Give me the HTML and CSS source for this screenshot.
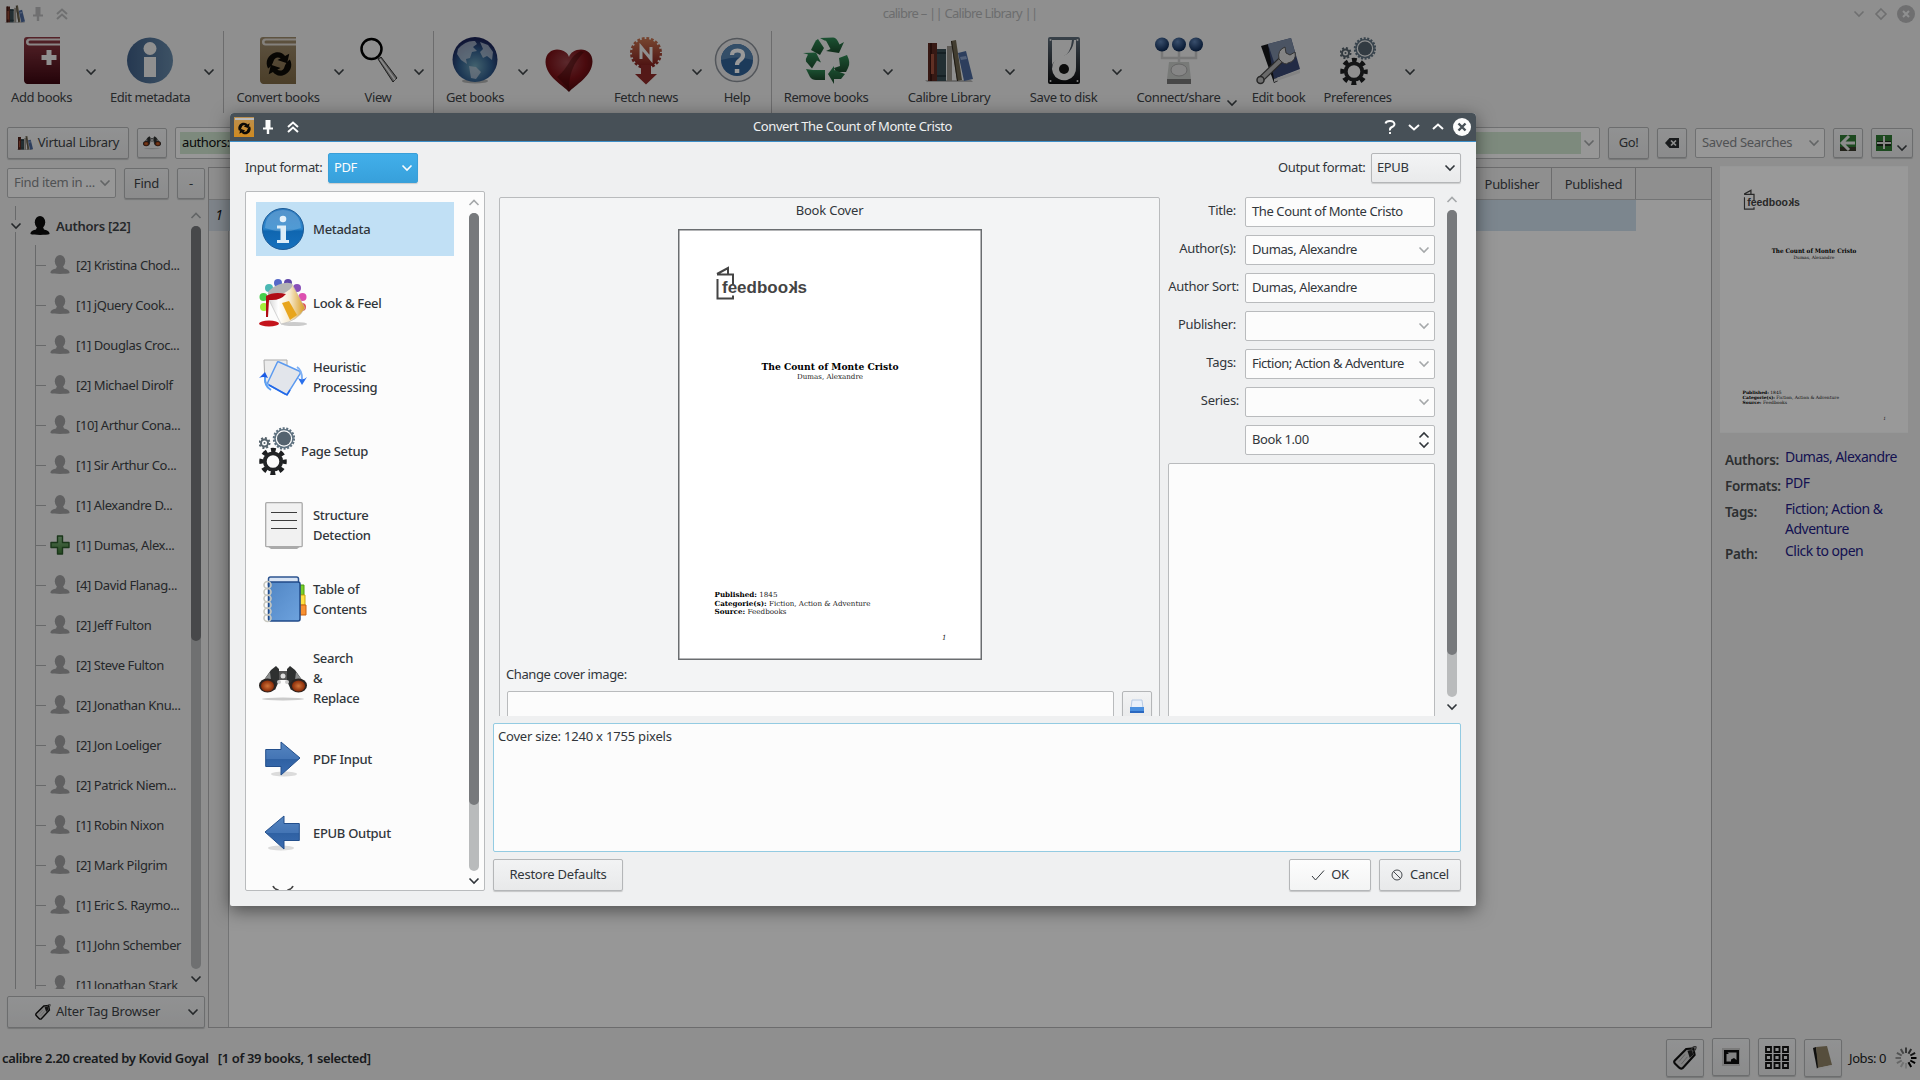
FILE: index.html
```html
<!DOCTYPE html>
<html lang="en">
<head>
<meta charset="utf-8">
<title>calibre - || Calibre Library ||</title>
<link rel="stylesheet" href="styles.css">
</head>
<body>
<svg class="defs" width="0" height="0">
  <defs>
    <linearGradient id="gRed" x1="0" y1="0" x2="0" y2="1"><stop offset="0" stop-color="#8e3a44"/><stop offset="1" stop-color="#3c0610"/></linearGradient>
    <linearGradient id="gTan" x1="0" y1="0" x2="0" y2="1"><stop offset="0" stop-color="#9c8a6c"/><stop offset="1" stop-color="#7d6844"/></linearGradient>
    <linearGradient id="gGold" x1="0" y1="0" x2="0" y2="1"><stop offset="0" stop-color="#b98f50"/><stop offset="1" stop-color="#d08a20"/></linearGradient>
    <linearGradient id="gBlue" x1="0" y1="0" x2="1" y2="0"><stop offset="0" stop-color="#3f5f87"/><stop offset="1" stop-color="#6688a8"/></linearGradient>
    <linearGradient id="gInfo" x1="0" y1="0" x2="0" y2="1"><stop offset="0" stop-color="#2f7cc0"/><stop offset=".5" stop-color="#2a85cc"/><stop offset=".55" stop-color="#0f66b0"/><stop offset="1" stop-color="#1670bd"/></linearGradient>
    <radialGradient id="gGlobe" cx=".5" cy=".65" r=".6"><stop offset="0" stop-color="#6fa3b8"/><stop offset=".6" stop-color="#2f5c8c"/><stop offset="1" stop-color="#1b2458"/></radialGradient>
    <radialGradient id="gBall" cx=".4" cy=".3" r=".7"><stop offset="0" stop-color="#5f83b4"/><stop offset="1" stop-color="#0c2852"/></radialGradient>
    <radialGradient id="gHeart" cx=".45" cy=".3" r=".8"><stop offset="0" stop-color="#97444a"/><stop offset=".5" stop-color="#7c1218"/><stop offset="1" stop-color="#3a0507"/></radialGradient>
    <linearGradient id="gNews" x1="0" y1="0" x2="0" y2="1"><stop offset="0" stop-color="#c4714e"/><stop offset="1" stop-color="#7f1d1d"/></linearGradient>
    <linearGradient id="gGreen" x1="0" y1="0" x2="0" y2="1"><stop offset="0" stop-color="#2f8a55"/><stop offset="1" stop-color="#1c4a2c"/></linearGradient>
    <linearGradient id="gDisk" x1="0" y1="0" x2="0" y2="1"><stop offset="0" stop-color="#5f6e7c"/><stop offset="1" stop-color="#0c0c0e"/></linearGradient>
    <linearGradient id="gArrow" x1="0" y1="0" x2="0" y2="1"><stop offset="0" stop-color="#5585c0"/><stop offset=".5" stop-color="#4475b5"/><stop offset=".52" stop-color="#2f61a3"/><stop offset="1" stop-color="#3a6cb0"/></linearGradient>
    <linearGradient id="gBucket" x1="0" y1="0" x2="1" y2="0"><stop offset="0" stop-color="#cfcfcf"/><stop offset=".3" stop-color="#fff"/><stop offset=".6" stop-color="#f6ead0"/><stop offset="1" stop-color="#d99a1c"/></linearGradient>
    <linearGradient id="gNote" x1="0" y1="0" x2="1" y2="1"><stop offset="0" stop-color="#5186c4"/><stop offset="1" stop-color="#6da2de"/></linearGradient>
    <radialGradient id="gLens"><stop offset="0" stop-color="#d0743a"/><stop offset="1" stop-color="#8a2c08"/></radialGradient>
    <linearGradient id="gPlus" x1="0" y1="0" x2="0" y2="1"><stop offset="0" stop-color="#86b886"/><stop offset="1" stop-color="#3c7a34"/></linearGradient>

    <symbol id="down" viewBox="0 0 12 12"><path d="M1.500 3.500 6 8l4.500-4.500" fill="none" stroke="currentColor" stroke-width="1.600"/></symbol>
    <symbol id="up" viewBox="0 0 12 12"><path d="M1.500 8 6 3.500 10.500 8" fill="none" stroke="currentColor" stroke-width="1.600"/></symbol>
    <symbol id="dblup" viewBox="0 0 14 14"><path d="M2 7 7 2.500 12 7M2 12l5-4.500 5 4.500" fill="none" stroke="currentColor" stroke-width="2"/></symbol>
    <symbol id="pin" viewBox="0 0 12 14"><path d="M3.500 0h5v7.500H11v2H7.200V14H4.800V9.500H1v-2h2.500z" fill="currentColor"/></symbol>
    <symbol id="person" viewBox="0 0 20 20"><ellipse cx="10" cy="6.300" rx="5.200" ry="6.300"/><path d="M7 11h6l1 2.500c4 .8 5.600 2.500 5.600 4.500-3 1.200-16 1.200-19.200 0 0-2 1.600-3.700 5.600-4.500z"/></symbol>
    <symbol id="plus" viewBox="0 0 20 20"><path d="M7.500 1h5v6.500H19v5h-6.500V19h-5v-6.500H1v-5h6.500z" fill="url(#gPlus)" stroke="#2c5a2c" stroke-width="1.400" stroke-linejoin="round"/></symbol>
    <symbol id="books" viewBox="0 0 48 42">
      <path d="M0 40h46l2 2H2z" fill="#000" opacity=".25"/>
      <path d="M3 3h9v38H3z" fill="#5c2a22"/><path d="M5 3h2v38H5z" fill="#3c1612"/><path d="M6 14h3v20H6z" fill="#a0503c"/>
      <path d="M12 9h9v32h-9z" fill="#3b4f55"/><path d="M12 12h9v2h-9zM12 35h9v2h-9z" fill="#26363c"/>
      <path d="M22 6h5v35h-5z" fill="#9a958c"/><path d="m26 1 5-1 6 40-5 1z" fill="#6f6651"/><path d="m26 1 1 0 6 40h-1z" fill="#322c20"/>
      <path d="m33 13 8-2 7 28-9 2z" fill="#4b689c"/><path d="m35 17 6-1 1 3-6 1z" fill="#89a0c8"/>
    </symbol>
    <symbol id="swap" viewBox="0 0 28 28">
      <g transform="rotate(-28 14 14)">
      <path d="M3 13C3 6 9 1.500 16 3c4 1 6 4 6.500 7H27l-6 7-6.500-7H18c-2-3-5-3-7-1-2 2-5 4-8 4z" fill="#0c0a06"/>
      <path d="M25 15c0 7-6 11.500-13 10-4-1-6-4-6.500-7H1l6-7 6.500 7H10c2 3 5 3 7 1 2-2 5-4 8-4z" fill="#0c0a06"/>
      </g>
    </symbol>
    <symbol id="gears" viewBox="0 0 36 48">
      <circle cx="25" cy="11.500" r="10" fill="none" stroke="#5f7280" stroke-width="2.500" stroke-dasharray="2 1.500"/>
      <circle cx="25" cy="11.500" r="9" fill="none" stroke="#5f7280" stroke-width="1.500"/>
      <circle cx="25" cy="11.500" r="7" fill="#54636f"/>
      <circle cx="5.500" cy="16" r="5" fill="none" stroke="#56636c" stroke-width="2" stroke-dasharray="2 1.900"/>
      <circle cx="5.500" cy="16" r="3.500" fill="none" stroke="#56636c" stroke-width="2"/>
      <circle cx="5.500" cy="16" r="1" fill="#56636c"/>
      <circle cx="14" cy="34.500" r="11.500" fill="none" stroke="#1d1f21" stroke-width="4.500" stroke-dasharray="4.800 4.232" stroke-dashoffset="2.400"/>
      <circle cx="14" cy="34.500" r="8.200" fill="none" stroke="#222426" stroke-width="3.800"/>
    </symbol>
    <symbol id="binoc" viewBox="0 0 48 36">
      <ellipse cx="24" cy="33" rx="21" ry="1.500" fill="#999" opacity=".5"/>
      <path d="M2 18 12 4l5-4 3 3v12l-4 9zM46 18 36 4l-5-4-3 3v12l4 9z" fill="#2e3030"/>
      <path d="m5 14 6-8 1 8-4 5zM43 14l-6-8-1 8 4 5z" fill="#8b8d8d"/>
      <path d="M20 5h8v9h-8z" fill="#555"/>
      <circle cx="24" cy="10" r="2.500" fill="#ddd"/>
      <circle cx="20" cy="16" r="2" fill="#ccc"/><circle cx="28" cy="16" r="2" fill="#ccc"/>
      <ellipse cx="8.500" cy="19.500" rx="8.500" ry="7" fill="#2a2422"/><ellipse cx="39.500" cy="19.500" rx="8.500" ry="7" fill="#2a2422"/>
      <ellipse cx="8.500" cy="20" rx="6.500" ry="5.500" fill="url(#gLens)"/><ellipse cx="39.500" cy="20" rx="6.500" ry="5.500" fill="url(#gLens)"/>
    </symbol>
    <symbol id="tag" viewBox="0 0 20 20"><path d="M11 2.500 17 2l1 5.500L8 18.500Q6.500 19.500 5 18l-3.500-3.500Q.5 13 1.500 12z" fill="#d8d8d8" stroke="#111" stroke-width="1.800"/><path d="m12 4 4-.8.800 4L14 10z" fill="#222"/><path d="M15 4q1-4 4-3.500 1 2-2 4" fill="none" stroke="#555"/><path d="m5 13 5-6 M7 15l5-6" stroke="#999" stroke-width=".7"/></symbol>
    <symbol id="brand" viewBox="0 0 92 34">
      <path d="M1 8 12 2v6M1 8.500h16v10M1.500 13v19.500H17v-3" fill="none" stroke="#444" stroke-width="2"/>
    </symbol>
  </defs>
</svg>

<main class="window">
  <header class="titlebar">
    <span class="tb-left">
      <svg width="20" height="18"><use href="#books"/></svg>
      <svg class="faint" width="12" height="14"><use href="#pin"/></svg>
      <svg class="faint" width="14" height="14"><use href="#dblup"/></svg>
    </span>
    <span class="tb-title">calibre – || Calibre Library ||</span>
    <span class="tb-right faint">
      <svg width="12" height="12"><use href="#down"/></svg>
      <svg width="12" height="12" viewBox="0 0 12 12"><path d="m6 1 5 5-5 5-5-5z" fill="none" stroke="currentColor" stroke-width="1.600"/></svg>
      <svg width="18" height="18" viewBox="0 0 18 18"><circle cx="9" cy="9" r="9" fill="currentColor"/><path d="m6 6 6 6m0-6-6 6" stroke="#eff0f1" stroke-width="2"/></svg>
    </span>
  </header>

  <nav class="toolbar">
    <div class="tool w83"><svg width="36" height="47" viewBox="0 0 36 47"><path d="M3 0h33v47H3q-3-1-3-4V3q0-3 3-3z" fill="url(#gRed)"/><path d="M36 1.500H5.500a3 3 0 0 0 0 7H36V6.500H6a1 1 0 0 1 0-3h30z" fill="#e6e0e0"/><path d="M22.500 13h5v5h5v5h-5v5h-5v-5h-5v-5h5z" fill="#eee"/></svg><span>Add books</span></div>
    <div class="drop w16"><svg width="12" height="12"><use href="#down"/></svg></div>
    <div class="tool w102"><svg width="46" height="47" viewBox="0 0 46 47"><circle cx="23" cy="23.500" r="23" fill="url(#gBlue)"/><circle cx="23" cy="11.500" r="6.500" fill="#eee"/><path d="M17 20h12v20H17z" fill="#eee"/></svg><span>Edit metadata</span></div>
    <div class="drop w16"><svg width="12" height="12"><use href="#down"/></svg></div>
    <div class="sep ml6"></div>
    <div class="tool w108"><svg width="36" height="47" viewBox="0 0 36 47"><path d="M3 0h33v47H3q-3-1-3-4V3q0-3 3-3z" fill="url(#gTan)"/><path d="M36 1.500H5.500a3 3 0 0 0 0 7H36V6.500H6a1 1 0 0 1 0-3h30z" fill="#ddd8d0"/><use href="#swap" x="4" y="12" width="30" height="30"/></svg><span>Convert books</span></div>
    <div class="drop w14"><svg width="12" height="12"><use href="#down"/></svg></div>
    <div class="tool w64"><svg width="40" height="47" viewBox="0 0 40 47"><path d="m20 22 3-2 16 21-4 4z" fill="#999" stroke="#333"/><path d="m22 22 15 21" stroke="#e6e6e6" stroke-width="1.500"/><circle cx="13.500" cy="12" r="10" fill="none" stroke="#000" stroke-width="2.500"/></svg><span>View</span></div>
    <div class="drop w18"><svg width="12" height="12"><use href="#down"/></svg></div>
    <div class="sep ml5"></div>
    <div class="tool w82"><svg width="46" height="47" viewBox="0 0 46 47"><ellipse cx="23" cy="44" rx="13" ry="2.500" fill="#888" opacity=".6"/><circle cx="23" cy="22.500" r="22.500" fill="url(#gGlobe)"/><path d="M6 12Q14 3 23 4l2 3-4 3 4 4-5 1-2 6-4 1 1 5-6-4-4-6zM28 5l8 3 5 7-1 8-5-4-4 2-3-6 3-3zM17 29l7 1 5 5-5 7-5-1z" fill="#c2ccd8" opacity=".7"/></svg><span>Get books</span></div>
    <div class="drop w14"><svg width="12" height="12"><use href="#down"/></svg></div>
    <div class="tool heart w78"><svg width="48" height="44" viewBox="0 0 48 44"><path d="M24 43C18 36 1 28 .5 13 .5 4 7 .5 12 .5c7 0 11 4 12 7.500C25 4 30 .5 36 .5c6 0 11.500 4 11.500 12C47 28 30 36 24 43z" fill="url(#gHeart)"/><path d="M36 2C24 7 25 18 12 28q6 6 12 12c0-14 4-26 15-37z" fill="#3a0405" opacity=".45"/></svg></div>
    <div class="tool w76"><svg width="34" height="48" viewBox="0 0 34 48"><circle cx="17" cy="16" r="14.500" fill="none" stroke="url(#gNews)" stroke-width="3" stroke-dasharray="2.800 1.750"/><circle cx="17" cy="16" r="14" fill="url(#gNews)"/><path d="M12 28h10v9h6L17 47.500 6 37h6z" fill="#8c2a28"/><path d="M12 22V10l10 12V10" fill="none" stroke="#eee" stroke-width="3"/></svg><span>Fetch news</span></div>
    <div class="drop w26"><svg width="12" height="12"><use href="#down"/></svg></div>
    <div class="tool w54"><svg width="46" height="47" viewBox="0 0 46 47"><circle cx="23" cy="23" r="21.500" fill="#e8e8ea" stroke="#8a9098" stroke-width="1.500"/><circle cx="23" cy="23" r="16" fill="#2f6197"/><path d="M7 23a16 16 0 0 1 32 0q-16-5-32 0z" fill="#5682ae"/><path d="M18 18q0-4.500 5.500-4.500T29 18q0 3-3 5t-3 5M20.800 34h4.500" fill="none" stroke="#fff" stroke-width="4.200"/></svg><span>Help</span></div>
    <div class="sep ml7"></div>
    <div class="tool w108"><svg width="46" height="47" viewBox="0 0 46 47"><g fill="url(#gGreen)"><path d="M17 1 30 .5q3 0 5 4l1.500 3 4.500-2.500-5 11-13-2 4.500-2-4-7.500q-1-1.500-2-1z"/><path d="m15 2 6 9-4 7-9-5 4-8q1-2 3-3z"/><path d="m36 21 8-3q4 8 1 13l-2 4H33l-2-4 6-2z"/><path d="M42 37l-4 5h-7v5l-6-10 6-8v4z"/><path d="m0 16 13-.5 5 10-4-2-5 8-6-7q-1-2 1-5l1-2z"/><path d="M10 33h12v10H13q-4 0-6-3l-4-8z"/></g></svg><span>Remove books</span></div>
    <div class="drop w16"><svg width="12" height="12"><use href="#down"/></svg></div>
    <div class="tool w106"><svg width="48" height="47"><use href="#books" y="1" width="48" height="46"/></svg><span>Calibre Library</span></div>
    <div class="drop w16"><svg width="12" height="12"><use href="#down"/></svg></div>
    <div class="tool w91"><svg width="32" height="47" viewBox="0 0 32 47"><rect width="32" height="47" rx="2" fill="url(#gDisk)"/><path d="M4 3h20q-1 13-9 17-9 3-11 8z" fill="#efefef"/><path d="M26 3h2v27a12 12 0 1 1-18-9q15-4 16-18z" fill="#efefef"/><circle cx="16" cy="32" r="5" fill="#151515"/><g fill="#ddd"><circle cx="2.500" cy="3" r="1"/><circle cx="29.500" cy="3" r="1"/><circle cx="2.500" cy="44" r="1"/><circle cx="29.500" cy="44" r="1"/></g></svg><span>Save to disk</span></div>
    <div class="drop w16"><svg width="12" height="12"><use href="#down"/></svg></div>
    <div class="tool connect w91"><svg width="48" height="47" viewBox="0 0 48 47"><path d="M7 13v8h34v-8M24 13v13" fill="none" stroke="#c8c8c8" stroke-width="2.500"/><circle cx="7" cy="7.500" r="7" fill="url(#gBall)"/><circle cx="24" cy="7.500" r="7" fill="url(#gBall)"/><circle cx="41" cy="7.500" r="7" fill="url(#gBall)"/><path d="M14 25h20l2 17H12z" fill="#c9cbc9"/><path d="M12 42h24v5H12z" fill="#777"/><ellipse cx="24" cy="33" rx="8" ry="6" fill="#e0e0e0" stroke="#a8a8a8"/></svg><span>Connect/share</span></div>
    <div class="drop low w16"><svg width="12" height="12"><use href="#down"/></svg></div>
    <div class="tool w77"><svg width="46" height="47" viewBox="0 0 46 47"><path d="m5 9 7-2 10 37-4 2z" fill="#15171a"/><path d="m12 7 23-6 9 31-26 10z" fill="#3a4874"/><path d="m12 7 23-6 5 18-21 9z" fill="#7d8ca6"/><path d="m18 45 26-9v-3l-26 9z" fill="#ddd"/><path d="m4 43 23-22" stroke="#444" stroke-width="6.500"/><path d="m4 43 23-22" stroke="#b0b0b0" stroke-width="4"/><path d="M23 22q-2-9 6-12l1 6 4 2 5-3q2 9-7 11-3 3-9-4z" fill="#ddd" stroke="#555"/><circle cx="4.500" cy="43" r="3.500" fill="#bbb" stroke="#444" stroke-width="1.500"/></svg><span>Edit book</span></div>
    <div class="tool w81"><svg width="36" height="48"><use href="#gears"/></svg><span>Preferences</span></div>
    <div class="drop w24"><svg width="12" height="12"><use href="#down"/></svg></div>
  </nav>

  <section class="searchbar">
    <button class="btn vlib"><svg width="16" height="14"><use href="#books"/></svg>Virtual Library</button>
    <button class="btn sq"><svg width="18" height="14"><use href="#binoc"/></svg></button>
    <div class="field search"><span class="hit">authors:"=Dumas, Alexandre"</span><svg class="grey" width="12" height="12"><use href="#down"/></svg></div>
    <button class="btn go">Go!</button>
    <button class="btn sq"><svg width="14" height="10" viewBox="0 0 14 10"><path d="M4.500 0H14v10H4.500L0 5z" fill="#2b2e31"/><path d="m6 2.500 5 5m0-5-5 5" stroke="#eff0f1" stroke-width="1.700"/></svg></button>
    <div class="field saved"><span class="hint">Saved Searches</span><svg class="grey" width="12" height="12"><use href="#down"/></svg></div>
    <button class="btn sq"><svg width="16" height="16" viewBox="0 0 16 16"><path d="M0 0h16v16H0z" fill="#2f7a35"/><path d="M0 12h16v4H0z" fill="#3a3a2c"/><path d="M9 1 2 8l7 7M2 8h13" fill="none" stroke="#e9e9e9" stroke-width="3"/></svg></button>
    <button class="btn addsrch"><svg width="16" height="16" viewBox="0 0 16 16"><path d="M0 0h16v16H0z" fill="#2f7a35"/><path d="M1 6h14v5H1z" fill="#1b2a1b"/><path d="M8 1v13M1 8h14" stroke="#e0e0e0" stroke-width="2"/></svg><svg class="lowarrow" width="12" height="12"><use href="#down"/></svg></button>
  </section>

  <div class="content">
    <aside class="side">
      <div class="findrow">
        <div class="field finder"><span class="hint">Find item in ...</span><svg class="grey" width="12" height="12"><use href="#down"/></svg></div>
        <button class="btn find">Find</button>
        <button class="btn minus">-</button>
      </div>
      <div class="treewrap">
        <ul class="tree">
          <li class="root"><svg class="caret" width="12" height="12"><use href="#down"/></svg><svg width="20" height="20"><use href="#person"/></svg>Authors [22]</li>
          <li><svg width="20" height="20"><use href="#person"/></svg>[2] Kristina Chod...</li>
          <li><svg width="20" height="20"><use href="#person"/></svg>[1] jQuery Cook...</li>
          <li><svg width="20" height="20"><use href="#person"/></svg>[1] Douglas Croc...</li>
          <li><svg width="20" height="20"><use href="#person"/></svg>[2] Michael Dirolf</li>
          <li><svg width="20" height="20"><use href="#person"/></svg>[10] Arthur Cona...</li>
          <li><svg width="20" height="20"><use href="#person"/></svg>[1] Sir Arthur Co...</li>
          <li><svg width="20" height="20"><use href="#person"/></svg>[1] Alexandre D...</li>
          <li><svg width="20" height="20"><use href="#plus"/></svg>[1] Dumas, Alex...</li>
          <li><svg width="20" height="20"><use href="#person"/></svg>[4] David Flanag...</li>
          <li><svg width="20" height="20"><use href="#person"/></svg>[2] Jeff Fulton</li>
          <li><svg width="20" height="20"><use href="#person"/></svg>[2] Steve Fulton</li>
          <li><svg width="20" height="20"><use href="#person"/></svg>[2] Jonathan Knu...</li>
          <li><svg width="20" height="20"><use href="#person"/></svg>[2] Jon Loeliger</li>
          <li><svg width="20" height="20"><use href="#person"/></svg>[2] Patrick Niem...</li>
          <li><svg width="20" height="20"><use href="#person"/></svg>[1] Robin Nixon</li>
          <li><svg width="20" height="20"><use href="#person"/></svg>[2] Mark Pilgrim</li>
          <li><svg width="20" height="20"><use href="#person"/></svg>[1] Eric S. Raymo...</li>
          <li><svg width="20" height="20"><use href="#person"/></svg>[1] John Schember</li>
          <li><svg width="20" height="20"><use href="#person"/></svg>[1] Jonathan Stark</li>
        </ul>
        <div class="scroll side-scroll"><svg class="grey" width="12" height="12"><use href="#up"/></svg><div class="track"><div class="thumb side-thumb"></div></div><svg width="12" height="12"><use href="#down"/></svg></div>
      </div>
      <button class="btn alter"><svg width="16" height="16"><use href="#tag"/></svg><span>Alter Tag Browser</span><svg width="12" height="12"><use href="#down"/></svg></button>
    </aside>

    <section class="table">
      <div class="thead"><span class="corner"></span><span class="th rest"></span><span class="th pub">Publisher</span><span class="th pubd">Published</span></div>
      <div class="trow"><span class="rownum">1</span><span class="cells"></span></div>
      <div class="tbody"><span class="gutter"></span></div>
    </section>

    <aside class="details">
      <svg class="thumbcover" width="188" height="267" viewBox="0 0 304 431">
        <rect width="304" height="431" fill="#fff"/>
        <use href="#brand" x="38" y="37" width="92" height="34"/>
        <g class="logo-text"><text x="44" y="64" textLength="66" lengthAdjust="spacingAndGlyphs">feedboo</text><text transform="translate(120 64) scale(-1 1)">k</text><text x="119.500" y="64">s</text></g>
        <text class="cv-title" x="152" y="141" textLength="137" lengthAdjust="spacingAndGlyphs">The Count of Monte Cristo</text>
        <text class="cv-author" x="152" y="150" textLength="66" lengthAdjust="spacingAndGlyphs">Dumas, Alexandre</text>
        <text class="cv-small" x="36.500" y="368" textLength="63" lengthAdjust="spacingAndGlyphs"><tspan class="b">Published:</tspan> 1845</text>
        <text class="cv-small" x="36.500" y="376.500" textLength="156" lengthAdjust="spacingAndGlyphs"><tspan class="b">Categorie(s):</tspan> Fiction, Action &amp; Adventure</text>
        <text class="cv-small" x="36.500" y="385" textLength="72" lengthAdjust="spacingAndGlyphs"><tspan class="b">Source:</tspan> Feedbooks</text>
        <text class="cv-small it" x="264" y="411">1</text>
      </svg>
      <dl class="meta">
        <dt>Authors:</dt><dd>Dumas, Alexandre</dd>
        <dt>Formats:</dt><dd>PDF</dd>
        <dt>Tags:</dt><dd>Fiction; Action &amp; Adventure</dd>
        <dt>Path:</dt><dd>Click to open</dd>
      </dl>
    </aside>
  </div>

  <footer class="status">
    <b class="credit">calibre 2.20 created by Kovid Goyal &nbsp; [1 of 39 books, 1 selected]</b>
    <button class="btn st"><svg width="24" height="24"><use href="#tag"/></svg></button>
    <button class="btn st up1"><svg width="18" height="18" viewBox="0 0 18 18"><path d="M0 0h18v18H0z" fill="#ccc"/><path d="M2 2h15v14H2z" fill="#0c0c0c"/><path d="M4.500 13.500V6h2.500L5.500 4.500h9V12l-2.500-2-3 1.500v2z" fill="#ddd"/></svg></button>
    <button class="btn st up1"><svg width="24" height="23" viewBox="0 0 24 23" fill="none" stroke="#111" stroke-width="1.800"><path d="M1 1h5v5H1zM9.500 1h5v5h-5zM18 1h5v5h-5zM1 9h5v5H1zM9.500 9h5v5h-5zM18 9h5v5h-5zM1 17h5v5H1zM9.500 17h5v5h-5zM18 17h5v5h-5z"/></svg></button>
    <button class="btn st last"><svg width="22" height="24" viewBox="0 0 22 24"><path d="m1 2 3-1 3 20-2 2z" fill="#1a1a18"/><path d="m4 1 11-1 5 19-14 3z" fill="#8f8366"/><path d="m5 22 15-3v2L6 24z" fill="#e6e6e6"/></svg></button>
    <span class="jobs">Jobs: 0</span>
    <svg class="spin" width="22" height="22" viewBox="-11 -11 22 22" stroke="#000" stroke-width="2"><path d="M5 0h5.500"/><path d="m4.300 2.500 4.800 2.700"/><path d="m2.500 4.300 2.700 4.800"/><path d="M0 5v5.500" opacity=".15"/><path d="M-2.500 4.300l-2.700 4.800" opacity=".2"/><path d="m-4.300 2.500-4.800 2.700" opacity=".28"/><path d="M-5 0h-5.500" opacity=".35"/><path d="m-4.300-2.500-4.800-2.700" opacity=".42"/><path d="m-2.500-4.300-2.700-4.800" opacity=".5"/><path d="M0-5v-5.500" opacity=".6"/><path d="m2.500-4.300 2.700-4.800" opacity=".7"/><path d="m4.300-2.500 4.800-2.700" opacity=".85"/></svg>
  </footer>
</main>

<div class="backdrop"></div>

<section class="dialog">
  <header class="dlg-title">
    <span class="tb-left dl">
      <svg width="20" height="20" viewBox="0 0 20 20"><path d="M0 0h20v20H0z" fill="url(#gGold)"/><path d="M1 1h19v2H1z" fill="#bbb"/><use href="#swap" x="3" y="4" width="15" height="15"/></svg>
      <svg width="12" height="14"><use href="#pin"/></svg>
      <svg width="14" height="14"><use href="#dblup"/></svg>
    </span>
    <span class="dlg-name">Convert The Count of Monte Cristo</span>
    <span class="dlg-btns">
      <svg width="12" height="14" viewBox="0 0 12 14"><path d="M1.500 3.500Q2 1 6 1t4.500 3Q10.500 6 8 7T6 10.500M6 12v2" fill="none" stroke="currentColor" stroke-width="1.900"/></svg>
      <svg width="12" height="12" viewBox="0 0 12 12"><path d="M1 4l5 4.500L11 4" fill="none" stroke="currentColor" stroke-width="2"/></svg>
      <svg width="12" height="12" viewBox="0 0 12 12"><path d="M1 8l5-4.500L11 8" fill="none" stroke="currentColor" stroke-width="2"/></svg>
      <svg width="18" height="18" viewBox="0 0 18 18"><circle cx="9" cy="9" r="9" fill="currentColor"/><path d="m5.500 5.500 7 7m0-7-7 7" stroke="#475057" stroke-width="2.400"/></svg>
    </span>
  </header>
  <div class="dlg-body">
    <div class="formats">
      <label>Input format:</label><div class="combo blue"><span>PDF</span><svg width="12" height="12"><use href="#down"/></svg></div>
      <label class="out">Output format:</label><div class="combo"><span>EPUB</span><svg width="12" height="12"><use href="#down"/></svg></div>
    </div>
    <div class="dlg-main">
      <div class="steps">
        <ul>
          <li class="on"><span class="ic"><svg width="42" height="42" viewBox="0 0 42 42"><circle cx="21" cy="21" r="20.500" fill="url(#gInfo)" stroke="#1b5a96"/><path d="M3 20Q4 3 21 2q17 1 18 18-18 7-36 0z" fill="#fff" opacity=".18"/><circle cx="21" cy="11" r="3.300" fill="#e4f1fa"/><path d="M15 17.500h9V32h3v3H15v-3h3.500V20.500H15z" fill="#dcedf8"/></svg></span>Metadata</li>
          <li><span class="ic"><svg width="48" height="48" viewBox="0 0 48 48"><circle cx="5" cy="28" r="4" fill="#a4f03c"/><circle cx="4.500" cy="18" r="4" fill="#48d04c"/><circle cx="10" cy="9" r="4" fill="#4cb8b4"/><circle cx="19" cy="4" r="4" fill="#5568c8"/><circle cx="29" cy="4" r="4" fill="#6048a8"/><circle cx="38" cy="9" r="4" fill="#8850b8"/><circle cx="43.500" cy="18" r="4" fill="#dc50b0"/><circle cx="43" cy="28" r="4" fill="#e05050"/><ellipse cx="35" cy="45" rx="13" ry="2" fill="#aaa" opacity=".6"/><path d="M8 17q11-13 25-12l13 24q-7 13-24 16z" fill="url(#gBucket)" stroke="#b8b8b8" stroke-width=".6"/><ellipse cx="21" cy="10.500" rx="13" ry="5" transform="rotate(-22 21 10.500)" fill="#b4b4b4"/><path d="M7 17q8-5 20-2-5 6-14 6H10l-1 17H7z" fill="#b00c14"/><path d="m23 24 7-2 8 14-7 5z" fill="#e8a51c"/><ellipse cx="10" cy="44.500" rx="10" ry="3" fill="#c4141c"/></svg></span>Look &amp; Feel</li>
          <li><span class="ic"><svg width="48" height="40" viewBox="0 0 48 40"><path d="M5 3h23v14L14 26H6z" fill="#ebebeb" stroke="#aaa"/><path d="m20 5 20 9q2 1 1 3L29 36q-1 2-3 1L10 28q-2-1-1-3L18 6q1-2 2-1z" fill="#e2e5eb" stroke="#5b9af0" stroke-width="1.500"/><path d="M10 28 28 38l3-5" fill="none" stroke="#2268e8" stroke-width="1.500"/><path d="M38 10q5 3 5 12" fill="none" stroke="#7fb0f4" stroke-width="2"/><path d="M39 21q5 3 9-1l-5 8z" fill="#2a70ec"/><path d="M12 33q-7-4-6-14" fill="none" stroke="#5ba0f4" stroke-width="2"/><path d="M0 21 6 15l3 6q-5-2-9 0z" fill="#1c5ce4"/></svg></span>Heuristic<br>Processing</li>
          <li class="narrow"><span class="ic"><svg width="36" height="48"><use href="#gears"/></svg></span>Page Setup</li>
          <li><span class="ic sheet"><svg width="38" height="47" viewBox="0 0 38 47"><path d="M2 44h34l-4 3H6z" fill="#888" opacity=".7"/><rect x=".7" y=".7" width="36.500" height="44" rx="1" fill="#f1f1f1" stroke="#aaa" stroke-width="1.300"/><path d="M6 10.500h26M6 18.500h26M6 26.500h26" stroke="#3c3c3c" stroke-width="1.200"/></svg></span>Structure<br>Detection</li>
          <li><span class="ic"><svg width="48" height="47" viewBox="0 0 48 47"><path d="M41 9h4v10h-4z" fill="#7ad028" stroke="#4a9a10"/><path d="M41 19h5v10h-5z" fill="#ffe040" stroke="#c8a010"/><path d="M41 29h6v10h-6z" fill="#f89030" stroke="#c86010"/><rect x="9.500" y="1" width="30" height="10" rx="2" fill="#d8e4f4" stroke="#2c5490" stroke-width="1.500"/><rect x="9.500" y="6" width="31.500" height="39" rx="2" fill="url(#gNote)" stroke="#204a88" stroke-width="1.500"/><g fill="none" stroke="#c8c8c0" stroke-width="1.600"><circle cx="8.500" cy="9" r="3.500"/><circle cx="8.500" cy="16" r="3.500"/><circle cx="8.500" cy="22.500" r="3.500"/><circle cx="8.500" cy="29" r="3.500"/><circle cx="8.500" cy="35.500" r="3.500"/><circle cx="8.500" cy="42" r="3.500"/></g></svg></span>Table of<br>Contents</li>
          <li class="tall"><span class="ic bn"><svg width="48" height="36"><use href="#binoc"/></svg></span>Search<br>&amp;<br>Replace</li>
          <li><span class="ic"><svg width="36" height="38" viewBox="0 0 36 38"><ellipse cx="19" cy="34" rx="13" ry="2.500" fill="#aaa" opacity=".4"/><path d="M.7 9.500H16V2l19 16-19 17v-8.500H.7z" fill="url(#gArrow)" stroke="#234f8c"/></svg></span>PDF Input</li>
          <li><span class="ic left"><svg width="36" height="38" viewBox="0 0 36 38"><ellipse cx="17" cy="34" rx="13" ry="2.500" fill="#aaa" opacity=".4"/><path d="M35.300 9.500H20V2L1 18l19 17v-8.500h15.300z" fill="url(#gArrow)" stroke="#234f8c"/></svg></span>EPUB Output</li>
          <li><span class="ic bug"><svg width="24" height="12" viewBox="0 0 24 12"><path d="M2 1q1 3 5 4l3 4h4l3-4q4-1 5-4" fill="none" stroke="#444" stroke-width="1.600"/></svg></span></li>
        </ul>
        <div class="scroll step-scroll"><svg class="grey" width="12" height="12"><use href="#up"/></svg><div class="track"><div class="thumb step-thumb"></div></div><svg width="12" height="12"><use href="#down"/></svg></div>
      </div>
      <div class="pane">
        <div class="page">
          <div class="group">
            <div class="gtitle">Book Cover</div>
            <svg class="cover" width="304" height="431" viewBox="0 0 304 431">
              <rect x=".75" y=".75" width="302.500" height="429.500" fill="#fff" stroke="#6a6d70" stroke-width="1.500"/>
              <use href="#brand" x="38" y="37" width="92" height="34"/>
              <g class="logo-text"><text x="44" y="64" textLength="66" lengthAdjust="spacingAndGlyphs">feedboo</text><text transform="translate(120 64) scale(-1 1)">k</text><text x="119.500" y="64">s</text></g>
              <text class="cv-title" x="152" y="141" textLength="137" lengthAdjust="spacingAndGlyphs">The Count of Monte Cristo</text>
              <text class="cv-author" x="152" y="150" textLength="66" lengthAdjust="spacingAndGlyphs">Dumas, Alexandre</text>
              <text class="cv-small" x="36.500" y="368" textLength="63" lengthAdjust="spacingAndGlyphs"><tspan class="b">Published:</tspan> 1845</text>
              <text class="cv-small" x="36.500" y="376.500" textLength="156" lengthAdjust="spacingAndGlyphs"><tspan class="b">Categorie(s):</tspan> Fiction, Action &amp; Adventure</text>
              <text class="cv-small" x="36.500" y="385" textLength="72" lengthAdjust="spacingAndGlyphs"><tspan class="b">Source:</tspan> Feedbooks</text>
              <text class="cv-small it" x="264" y="411">1</text>
            </svg>
            <div class="chg">Change cover image:</div>
            <div class="chgrow"><div class="field path"></div><button class="btn browse"><svg width="16" height="16" viewBox="0 0 16 16"><path d="M3 1h10l1 8H2z" fill="#e8f0fa" stroke="#a8c0e0" stroke-width=".8"/><path d="M1 8h14v6H1z" fill="#4a90e0"/><path d="M1 12h14v2H1z" fill="#2a68c0"/></svg></button></div>
          </div>
          <div class="form">
            <label>Title:</label><div class="field">The Count of Monte Cristo</div>
            <label>Author(s):</label><div class="field">Dumas, Alexandre<svg class="grey" width="12" height="12"><use href="#down"/></svg></div>
            <label class="wide">Author Sort:</label><div class="field">Dumas, Alexandre</div>
            <label>Publisher:</label><div class="field"><svg class="grey" width="12" height="12"><use href="#down"/></svg></div>
            <label>Tags:</label><div class="field tags">Fiction; Action &amp; Adventure<svg class="grey" width="12" height="12"><use href="#down"/></svg></div>
            <label class="wide">Series:</label><div class="field"><svg class="grey" width="12" height="12"><use href="#down"/></svg></div>
            <label></label><div class="field">Book 1.00<svg width="12" height="18" viewBox="0 0 12 18"><path d="M1.500 6.500 6 2l4.500 4.500M1.500 11.500 6 16l4.500-4.500" fill="none" stroke="currentColor" stroke-width="1.600"/></svg></div>
            <div class="comments"></div>
          </div>
          <div class="scroll pscroll"><svg class="grey" width="12" height="12"><use href="#up"/></svg><div class="track"><div class="thumb page-thumb"></div></div><svg width="12" height="12"><use href="#down"/></svg></div>
        </div>
        <div class="log">Cover size: 1240 x 1755 pixels</div>
        <div class="actions">
          <button class="btn restore">Restore Defaults</button>
          <button class="btn ok"><svg width="14" height="12" viewBox="0 0 14 12"><path d="m1 7 3.500 4L13 1.500" fill="none" stroke="#31363b" stroke-width="1"/></svg>OK</button>
          <button class="btn cancel"><svg width="12" height="12" viewBox="0 0 12 12"><circle cx="6" cy="6" r="5" fill="none" stroke="#31363b" stroke-width=".9"/><path d="m2.500 2.500 7 7" stroke="#31363b" stroke-width=".9"/></svg>Cancel</button>
        </div>
      </div>
    </div>
  </div>
</section>
</body>
</html>
```

FILE: styles.css
```css
* { box-sizing: border-box; }
html, body { margin: 0; }
body {
  position: relative;
  width: 1920px;
  height: 1080px;
  overflow: hidden;
  font-family: "Noto Sans", "Open Sans", sans-serif;
  font-size: 13px;
  line-height: 20px;
  letter-spacing: -0.4px;
  color: #31363b;
  background: #eff0f1;
}
svg { flex: none; display: block; overflow: visible; }
ul, dl, dd { margin: 0; padding: 0; list-style: none; }
.defs { position: absolute; }
.grey { color: #a5a8aa; }
.faint { color: #b9babb; }

/* main window */
.window { display: flex; flex-direction: column; width: 1920px; height: 1080px; background: #eeefef; color: #3e4347; white-space: nowrap; }
.titlebar { display: flex; align-items: center; height: 28px; padding: 0 5px; }
.tb-left { display: flex; align-items: center; gap: 7px; width: 200px; }
.tb-left svg:nth-child(3) { margin-left: 4px; }
.tb-title { flex: 1; text-align: center; color: #b5b6b7; letter-spacing: -0.75px; padding-bottom: 2px; }
.tb-right { display: flex; align-items: center; justify-content: flex-end; gap: 10px; width: 200px; }

.toolbar { display: flex; height: 99px; padding-top: 3px; }
.tool { display: flex; flex-direction: column; align-items: center; height: 82px; padding-top: 6px; }
.tool svg { flex: none; margin-bottom: auto; }
.tool span { height: 20px; margin-bottom: 6px; }
.tool.heart { padding-top: 18px; }
.connect { margin-left: 8px; }
.drop { display: flex; justify-content: center; padding-top: 35px; }
.drop.low { padding-top: 66px; }
.sep { width: 1px; height: 82px; background: #b4b5b6; }
.ml5 { margin-left: 5px; } .ml6 { margin-left: 6px; } .ml7 { margin-left: 7px; }
.w14 { width: 14px; } .w16 { width: 16px; } .w18 { width: 18px; } .w24 { width: 24px; } .w26 { width: 26px; }
.w54 { width: 54px; } .w64 { width: 64px; } .w76 { width: 76px; } .w77 { width: 77px; } .w78 { width: 78px; }
.w81 { width: 81px; } .w82 { width: 82px; } .w83 { width: 83px; } .w91 { width: 91px; }
.w102 { width: 102px; } .w106 { width: 106px; } .w108 { width: 108px; }

.btn {
  display: flex; align-items: center; justify-content: center;
  padding: 0 0 2px; margin: 0;
  font: inherit; letter-spacing: inherit; color: inherit; white-space: nowrap;
  background: linear-gradient(#f2f3f4, #e8e9ea);
  border: 1px solid #b4b6b8; border-radius: 2px;
  box-shadow: 0 1px 1px rgba(0, 0, 0, .18);
}
.btn svg, .field svg, .combo svg { margin-top: 2px; }
.field {
  display: flex; align-items: center; justify-content: space-between;
  height: 30px; padding: 0 4px 2px 6px;
  background: #fcfcfc; border: 1px solid #b9bbbd; border-radius: 2px;
}
.field svg { margin-left: auto; }
.hint { color: #86898c; letter-spacing: -0.3px; }

.searchbar { display: flex; align-items: center; gap: 8px; height: 32px; margin-bottom: 1px; padding-left: 7px; }
.vlib { width: 122px; height: 32px; gap: 5px; letter-spacing: -0.3px; }
.sq { width: 30px; height: 30px; }
.search { flex: none; width: 1425px; height: 32px; padding: 0 4px; }
.search svg { margin-top: 0; }
.hit { width: 1401px; height: 22px; background: #d0e6d0; padding-left: 2px; color: #111; }
.go { width: 41px; height: 32px; }
.saved { width: 130px; }
.addsrch { width: 42px; height: 30px; gap: 4px; }
.btn .lowarrow { margin-top: 12px; }

.content { display: flex; height: 868px; padding-top: 6px; }
.side { width: 208px; padding: 2px 3px 0 7px; height: 862px; display: flex; flex-direction: column; }
.findrow { display: flex; gap: 8px; height: 30px; }
.finder { width: 109px; }
.find { width: 45px; height: 31px; letter-spacing: -0.2px; }
.minus { width: 28px; height: 31px; }
.treewrap { display: flex; height: 783px; margin-top: 8px; margin-bottom: 7px; overflow: hidden; }
.tree { flex: 1; margin-left: 8px; border-left: 1px solid #aeb0b1; }
.tree li { display: flex; align-items: center; gap: 6px; height: 40px; margin-left: 19px; border-left: 1px solid #aeb0b1; fill: #a0a1a2; }
.tree li::before { content: ""; width: 10px; height: 1px; margin-right: -2px; background: #aeb0b1; }
.tree .root { height: 39px; margin-left: -6px; border: 0; gap: 9px; fill: #0c0c0c; font-weight: 600; letter-spacing: -0.25px; }
.tree .root::before { display: none; }
.tree .root .caret { background: #eeefef; }
.tree .root svg + svg { margin-right: -3px; margin-left: -1px; }

.scroll { display: flex; flex-direction: column; align-items: center; width: 12px; }
.track { flex: 1; width: 10px; margin: 4px 0; border-radius: 5px; background: #b9bbbc; }
.thumb { width: 10px; border-radius: 5px; background: #77797c; }
.side-scroll { padding: 4px 0 4px; margin-right: 3px; }
.side-thumb { height: 415px; }
.alter { width: 198px; height: 32px; gap: 5px; padding-left: 27px; padding-right: 5px; justify-content: flex-start; letter-spacing: -0.2px; }
.alter svg:last-child { margin-left: auto; }

.table { display: flex; flex-direction: column; width: 1504px; height: 861px; margin-top: 1px; border: 1px solid #b4b5b6; }
.thead { display: flex; height: 32px; border-bottom: 1px solid #c0c2c3; }
.th { display: flex; align-items: center; justify-content: center; border-right: 1px solid #b4b5b6; letter-spacing: -0.3px; }
.corner { width: 20px; }
.rest { width: 1243px; border: 0; }
.pub { width: 80px; padding-left: 1px; }
.pubd { width: 84px; }
.trow { display: flex; height: 31px; background: #fcfcfc; }
.rownum { width: 20px; background: #d2dde6; text-align: center; line-height: 30px; font-style: italic; font-size: 14px; color: #16181a; }
.cells { width: 1407px; background: #cfdfed; }
.tbody { display: flex; flex: 1; background: #fcfcfc; }
.gutter { width: 20px; background: #eeefef; border-right: 1px solid #c0c2c3; }

.details { padding-left: 8px; }
.meta { display: grid; grid-template-columns: 60px 122px; row-gap: 3px; margin: 14px 0 0 5px; white-space: normal; }
.meta dt { font-weight: 600; font-size: 13.5px; line-height: 19px; padding-top: 4px; color: #4c4f52; letter-spacing: -0.3px; }
.meta dd { font-size: 14px; line-height: 19.5px; color: #241c88; letter-spacing: -0.5px; }

.status { display: flex; align-items: center; height: 52px; padding: 8px 0 0 2px; }
.credit { width: 1664px; font-weight: 600; letter-spacing: -0.36px; color: #2b2e31; }
.st { width: 38px; height: 38px; margin-right: 8px; flex: none; }
.up1 { margin-top: -2px; }
.last { margin-right: 7px; }
.jobs { width: 46px; color: #222; }

.backdrop { position: absolute; inset: 0; background: rgba(0, 0, 0, .4); }

/* dialog */
.dialog {
  position: absolute; left: 230px; top: 113px; width: 1246px; height: 793px;
  background: #eff0f1; border-radius: 4px 4px 2px 2px;
  box-shadow: 0 4px 18px rgba(0, 0, 0, .5);
  white-space: nowrap;
}
.dlg-title {
  display: flex; align-items: center; height: 29px; padding: 0 5px 0 4px;
  background: #475057; border-bottom: 1px solid #3d8fc8; border-radius: 4px 4px 0 0; color: #fcfcfc;
}
.tb-left.dl { gap: 8px; }
.dlg-name { flex: 1; text-align: center; color: #eff0f1; padding-bottom: 2px; }
.dlg-btns { display: flex; align-items: center; justify-content: flex-end; gap: 12px; width: 200px; }
.dlg-btns svg:last-child { margin-left: -3px; }

.dlg-body { padding: 11px 15px 0; }
.formats { display: flex; align-items: center; height: 30px; }
.formats label { width: 83px; padding-bottom: 2px; padding-right: 1px; letter-spacing: -0.35px; }
.formats .out { margin-left: auto; width: 93px; }
.combo {
  display: flex; align-items: center; justify-content: space-between; width: 90px; height: 30px; padding: 0 4px 2px 5px;
  background: linear-gradient(#f3f4f5, #e9eaeb); border: 1px solid #b4b6b8; border-radius: 2px; box-shadow: 0 1px 1px rgba(0, 0, 0, .15);
}
.blue { background: linear-gradient(#42afea, #37a0db); border-color: #3a9fd8; color: #fcfcfc; }

.dlg-main { display: flex; margin-top: 8px; }
.steps { display: flex; justify-content: space-between; width: 240px; height: 700px; padding: 10px 4px 3px 10px; background: #fcfcfc; border: 1px solid #b9bbbd; border-radius: 2px; overflow: hidden; }
.steps ul { width: 198px; height: 688px; overflow: hidden; }
.steps li { position: relative; display: flex; align-items: center; min-height: 54px; margin-bottom: 20px; padding-left: 57px; font-weight: 500; letter-spacing: -0.3px; }
.steps li.tall { min-height: 66px; padding-bottom: 2px; }
.steps li.narrow { padding-left: 45px; }
.steps li.on { background: #c1e0f5; }
.ic { position: absolute; left: 3px; top: 0; width: 48px; height: 100%; display: flex; align-items: center; justify-content: center; }
.narrow .ic { width: 36px; }
.sheet { padding-left: 2px; }
.left { padding-right: 2px; }
.bn { padding-top: 10px; }
.bug { align-items: flex-start; padding-top: 5px; }
.step-scroll { margin-top: -5px; }
.step-thumb { height: 592px; }

.pane { display: flex; flex-direction: column; width: 968px; margin-left: 8px; }
.page { display: flex; height: 525px; padding: 6px 0 0 6px; overflow: hidden; }
.group { width: 661px; height: 560px; padding: 2px 6px 0; background: #f3f4f5; border: 1px solid #b9bbbd; border-radius: 2px; }
.gtitle { text-align: center; letter-spacing: -0.2px; }
.cover { margin: 9px auto 0; }
.chg { margin: 4px 0 0 0; }
.chgrow { display: flex; gap: 8px; margin: 7px 0 0 1px; }
.path { width: 607px; height: 31px; }
.browse { width: 30px; height: 31px; }
.form { display: grid; grid-template-columns: 68px 190px; grid-auto-rows: 30px; gap: 8px 9px; margin-left: 8px; height: 560px; align-content: start; }
.form label { text-align: right; line-height: 27px; letter-spacing: -0.3px; }
.form label.wide { margin-right: -3px; }
.tags { letter-spacing: -0.5px; }
.comments { grid-column: 1 / 3; height: 300px; background: #fcfcfc; border: 1px solid #b9bbbd; border-radius: 2px; }
.pscroll { margin-left: 11px; padding: 0 0 3px; margin-top: -3px; height: 522px; }
.page-thumb { height: 445px; }
.log { height: 129px; margin-top: 7px; padding: 2px 4px; background: #fcfcfc; border: 1px solid #93cbe2; border-radius: 2px; letter-spacing: -0.2px; }
.actions { display: flex; gap: 8px; margin-top: 7px; letter-spacing: -0.25px; }
.actions .btn { height: 32px; }
.restore { width: 130px; margin-right: auto; }
.ok { width: 82px; gap: 6px; }
.actions .ok { background: linear-gradient(#fdfdfd, #f3f4f4); }
.cancel { width: 82px; gap: 7px; }

/* cover artwork */
.logo-text { font: bold 17px "Liberation Sans", sans-serif; fill: #444; letter-spacing: 0; }
.cv-title { font: bold 10px "DejaVu Serif", serif; text-anchor: middle; letter-spacing: 0; }
.cv-author { font: 7px "DejaVu Serif", serif; text-anchor: middle; letter-spacing: 0; fill: #222; }
.cv-small { font: 7px "DejaVu Serif", serif; letter-spacing: 0; fill: #222; }
.b { font-weight: bold; fill: #000; }
.it { font-style: italic; }
```
